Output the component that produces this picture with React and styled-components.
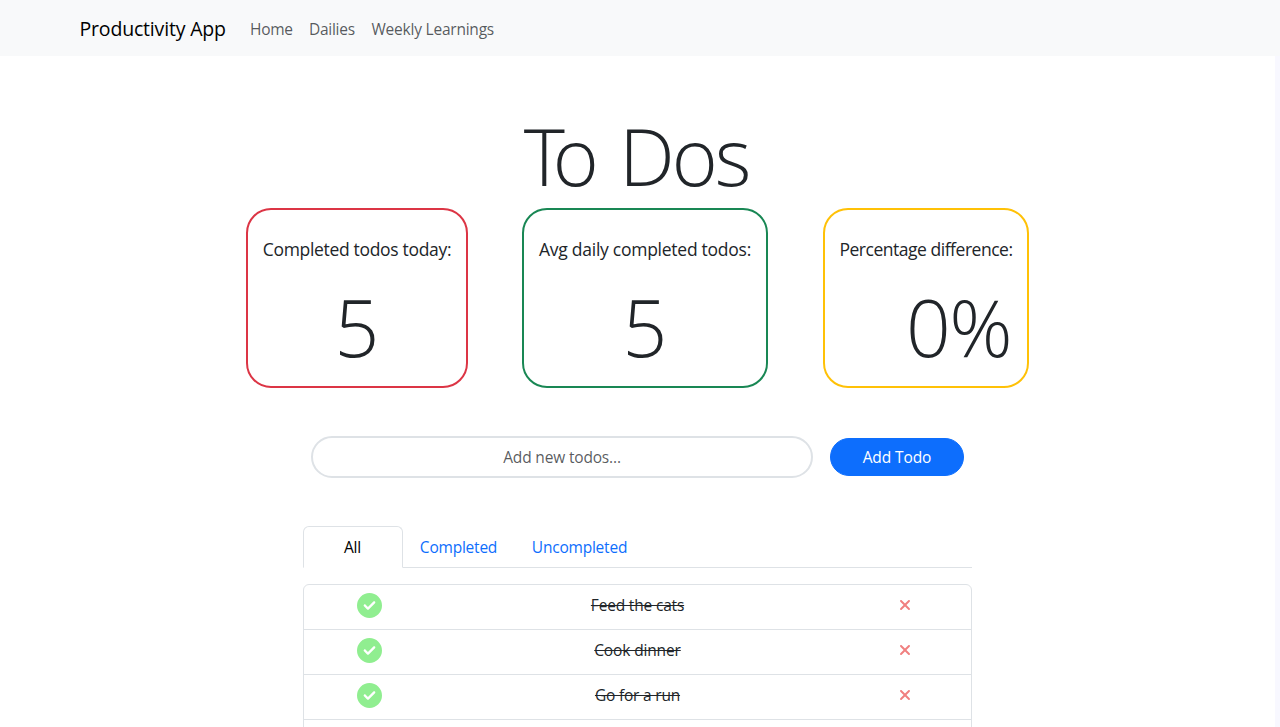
import React from "react";
import styled, { createGlobalStyle } from "styled-components";
import { FaCircleCheck, FaXmark } from "react-icons/fa6";

const GlobalStyle = createGlobalStyle`
  *, *::before, *::after { box-sizing: border-box; }
  html, body { margin: 0; height: 100%; overflow: hidden; }
  body {
    font-family: "Segoe UI", "Open Sans", "Noto Sans", sans-serif;
    font-size: 15.5px;
    line-height: 24px;
    color: #212529;
    background: #fff;
  }
`;

const Screen = styled.div`
  display: flex;
  flex-direction: column;
  height: 727px;
  overflow: hidden;
`;

const Navbar = styled.nav`
  display: flex;
  align-items: center;
  flex: none;
  height: 56px;
  padding: 2px 79.5px 0;
  background: #f8f9fa;
`;

const Brand = styled.a`
  width: 146px;
  margin-right: 24.5px;
  font-size: 19.5px;
  line-height: 30px;
  letter-spacing: -0.18px;
  white-space: nowrap;
  color: #000;
`;

const NavLink = styled.a`
  width: ${(p) => p.$width}px;
  margin-right: 16px;
  letter-spacing: ${(p) => p.$spacing}px;
  white-space: nowrap;
  color: rgba(33, 37, 41, 0.75);
`;

const Viewport = styled.div`
  display: flex;
  flex: 1;
  min-height: 0;
`;

const Page = styled.main`
  display: flex;
  flex: 1;
  flex-direction: column;
  align-items: center;
  padding-top: 52px;
  overflow: hidden;
`;

const Scrollbar = styled.div`
  width: 5px;
  background: #f8f8ff;
`;

const Title = styled.h1`
  margin: 0 0 5px;
  font-size: 78.5px;
  font-weight: 300;
  line-height: 95px;
  white-space: nowrap;
`;

const Kern = styled.span`
  letter-spacing: ${(p) => p.$spacing}px;
`;

const Stats = styled.section`
  display: flex;
  flex: none;
  width: 783px;
`;

const StatCard = styled.article`
  display: flex;
  flex-direction: column;
  align-items: center;
  width: ${(p) => p.$width}px;
  height: 180px;
  margin-right: ${(p) => p.$gap}px;
  padding-top: 26px;
  border: 2px solid ${(p) => p.$color};
  border-radius: 25px;
`;

const StatLabel = styled.p`
  margin: 0;
  font-size: 17.5px;
  line-height: 27px;
  letter-spacing: ${(p) => p.$spacing}px;
  white-space: nowrap;
`;

const StatValue = styled.p`
  margin: 16px 0 0;
  padding-left: ${(p) => p.$indent || 0}px;
  font-size: 78.5px;
  font-weight: 300;
  line-height: 95px;
  letter-spacing: ${(p) => p.$spacing || 0}px;
  white-space: nowrap;
`;

const TodoForm = styled.form`
  display: flex;
  align-items: center;
  flex: none;
  gap: 17px;
  width: 653px;
  margin-top: 48px;
`;

const TodoInput = styled.input`
  width: 502px;
  height: 42px;
  padding: 0 14px;
  border: 2px solid #dee2e6;
  border-radius: 25px;
  font: inherit;
  letter-spacing: -0.17px;
  text-align: center;
  outline: none;
  &::placeholder { color: rgba(33, 37, 41, 0.75); opacity: 1; }
`;

const AddButton = styled.button`
  width: 134px;
  height: 38px;
  padding: 0;
  border: 1px solid #0d6efd;
  border-radius: 25px;
  background: #0d6efd;
  color: #fff;
  font: inherit;
  letter-spacing: -0.1px;
`;

const Tabs = styled.div`
  display: flex;
  flex: none;
  width: 669px;
  height: 42px;
  margin-top: 48px;
  border-bottom: 1px solid #dee2e6;
`;

const Tab = styled.button`
  width: ${(p) => p.$width}px;
  height: 42px;
  padding: 0 1px 0 0;
  border-width: 1px;
  border-style: solid;
  border-color: ${(p) => (p.$active ? "#dee2e6 #dee2e6 #fff" : "transparent")};
  border-radius: 6px 6px 0 0;
  background: ${(p) => (p.$active ? "#fff" : "transparent")};
  color: ${(p) => (p.$active ? "#000" : "#0d6efd")};
  font: inherit;
  letter-spacing: -0.22px;
`;

const TodoList = styled.ul`
  flex: none;
  width: 669px;
  height: 181px;
  margin: 16px 0 0;
  padding: 0;
  border: 1px solid #dee2e6;
  border-radius: 6px;
  list-style: none;
`;

const TodoRow = styled.li`
  display: grid;
  grid-template-columns: 131px 1fr 131px;
  align-items: center;
  justify-items: center;
  height: 45px;
  padding-bottom: 3px;
  border-bottom: 1px solid #dee2e6;
`;

const DoneIcon = styled(FaCircleCheck)`
  width: 25px;
  height: 25px;
  color: lightgreen;
`;

const RemoveIcon = styled(FaXmark)`
  width: 16px;
  height: 16px;
  margin: 0 2px 1px 0;
  color: lightcoral;
`;

const TodoText = styled.span`
  padding-bottom: 2px;
  letter-spacing: ${(p) => p.$spacing}px;
  text-decoration: line-through;
`;

const links = [
  { label: "Home", width: 43, spacing: -0.25 },
  { label: "Dailies", width: 46.5, spacing: -0.27 },
  { label: "Weekly Learnings", width: 123, spacing: -0.22 },
];

const stats = [
  { label: "Completed todos today:", value: "5", color: "#dc3545", width: 222, gap: 54, spacing: -0.32 },
  { label: "Avg daily completed todos:", value: "5", color: "#198754", width: 246, gap: 55, spacing: -0.26 },
  { label: "Percentage difference:", value: "0%", color: "#ffc107", width: 206, gap: 0, spacing: -0.47, indent: 65, valueSpacing: -1.5 },
];

const tabs = [
  { label: "All", width: 100, active: true },
  { label: "Completed", width: 112 },
  { label: "Uncompleted", width: 130 },
];

const todos = [
  { text: "Feed the cats", spacing: -0.18 },
  { text: "Cook dinner", spacing: -0.14 },
  { text: "Go for a run", spacing: -0.2 },
];

export default function App() {
  return (
    <Screen>
      <GlobalStyle />
      <Navbar>
        <Brand>Productivity App</Brand>
        {links.map((l) => (
          <NavLink key={l.label} $width={l.width} $spacing={l.spacing}>{l.label}</NavLink>
        ))}
      </Navbar>
      <Viewport>
        <Page>
          <Title>
            <Kern $spacing={-12}>T</Kern>
            <Kern $spacing={0}>o </Kern>
            <Kern $spacing={-3}>Do</Kern>s
          </Title>
          <Stats>
            {stats.map((s) => (
              <StatCard key={s.label} $color={s.color} $width={s.width} $gap={s.gap}>
                <StatLabel $spacing={s.spacing}>{s.label}</StatLabel>
                <StatValue $indent={s.indent} $spacing={s.valueSpacing}>{s.value}</StatValue>
              </StatCard>
            ))}
          </Stats>
          <TodoForm>
            <TodoInput placeholder="Add new todos..." />
            <AddButton type="button">Add Todo</AddButton>
          </TodoForm>
          <Tabs>
            {tabs.map((t) => (
              <Tab key={t.label} $width={t.width} $active={t.active}>{t.label}</Tab>
            ))}
          </Tabs>
          <TodoList>
            {todos.map((t) => (
              <TodoRow key={t.text}>
                <DoneIcon />
                <TodoText $spacing={t.spacing}>{t.text}</TodoText>
                <RemoveIcon />
              </TodoRow>
            ))}
          </TodoList>
        </Page>
        <Scrollbar />
      </Viewport>
    </Screen>
  );
}
